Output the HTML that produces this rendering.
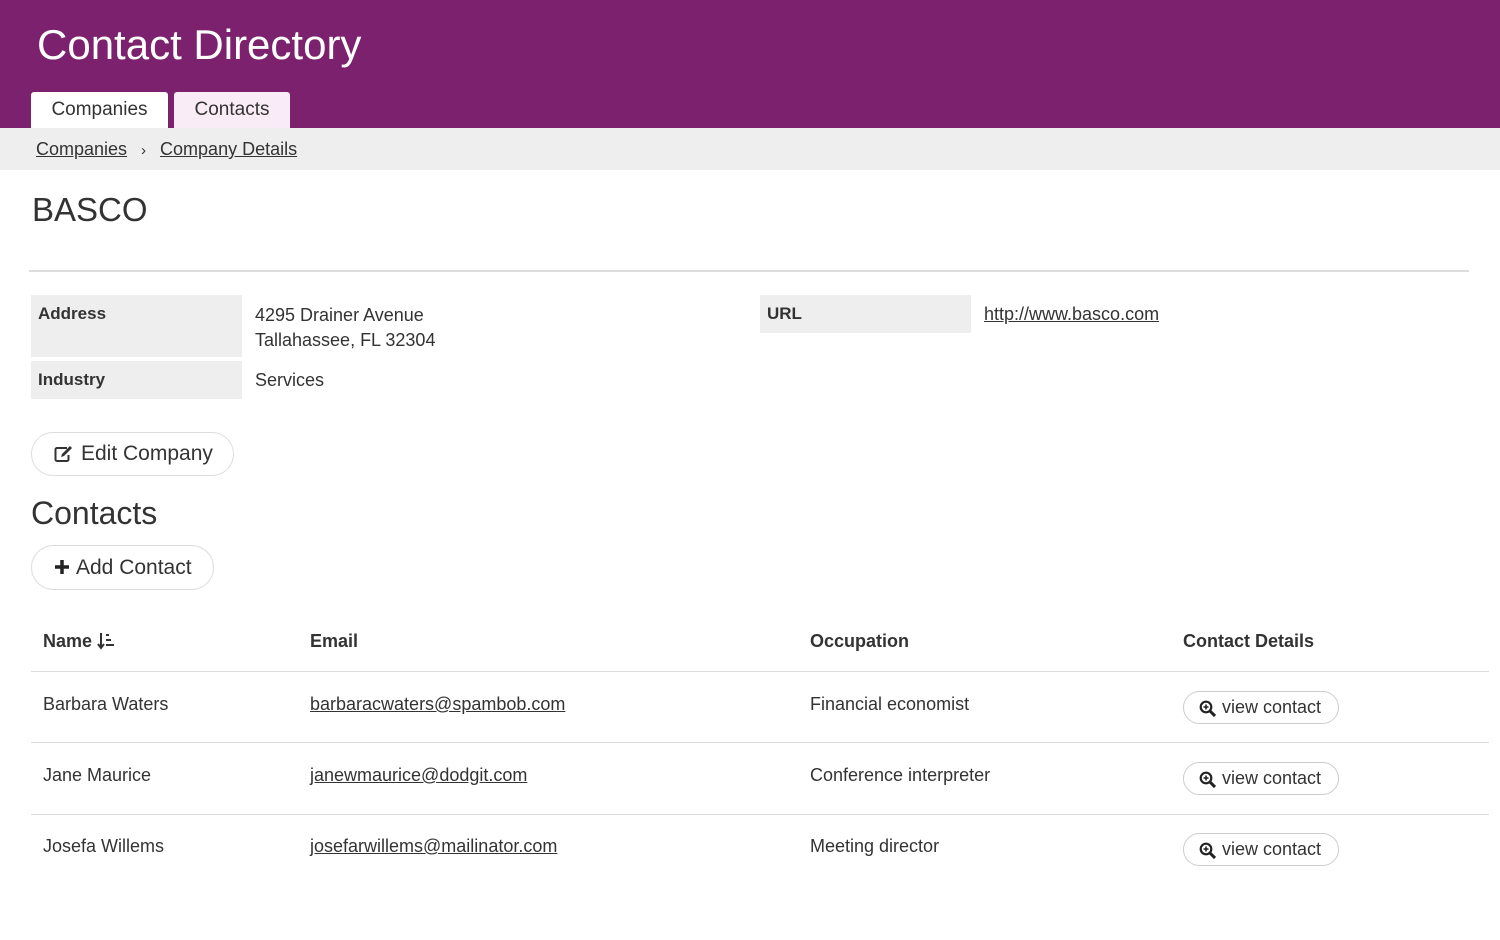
<!DOCTYPE html>
<html><head><style>
*{box-sizing:border-box;margin:0;padding:0}
body{width:1500px;height:940px;background:#fff;font-family:"Liberation Sans",sans-serif;color:#333;position:relative;overflow:hidden}
.abs{position:absolute;white-space:nowrap}
a{color:#333;text-decoration:underline}
.hdr{position:absolute;left:0;top:0;width:1500px;height:128px;background:#7b216d}
.tab{position:absolute;top:92px;height:36px;border-radius:3px 3px 0 0;font-size:19px;line-height:36px;text-align:center;color:#333}
.lbl{position:absolute;background:#eee;font-weight:bold;font-size:17px;padding:9px 7px}
.btn{position:absolute;border:1px solid #ddd;border-radius:24px;font-size:21px;color:#333}
.vbtn{position:absolute;left:1183px;width:156px;height:33px;border:1px solid #ccc;border-radius:17px;font-size:18px;line-height:31px;padding-left:38px}
.vbtn svg{position:absolute;left:15px;top:8px}
.row{position:absolute;font-size:18px}
.line{position:absolute;left:31px;width:1458px;height:1px;background:#ddd}
</style></head><body>
<div class="hdr"></div>
<div class="abs" style="left:37px;top:21px;font-size:42px;color:#fff">Contact Directory</div>
<div class="tab" style="left:31px;width:137px;background:#fff">Companies</div>
<div class="tab" style="left:174px;width:116px;background:#f9ecf7">Contacts</div>
<div class="abs" style="left:0;top:128px;width:1500px;height:42px;background:#eee"></div>
<div class="abs" style="left:36px;top:139px;font-size:18px"><a href="#">Companies</a><span style="margin:0 14px;font-size:15px">›</span><a href="#">Company Details</a></div>
<div class="abs" style="left:32px;top:191px;font-size:33px">BASCO</div>
<div class="abs" style="left:29px;top:270px;width:1440px;height:2px;background:#ddd"></div>
<div class="lbl" style="left:31px;top:295px;width:211px;height:62px">Address</div>
<div class="abs" style="left:255px;top:303px;font-size:18px;line-height:25px">4295 Drainer Avenue<br>Tallahassee, FL 32304</div>
<div class="lbl" style="left:31px;top:361px;width:211px;height:38px">Industry</div>
<div class="abs" style="left:255px;top:370px;font-size:18px">Services</div>
<div class="lbl" style="left:760px;top:295px;width:211px;height:38px">URL</div>
<div class="abs" style="left:984px;top:304px;font-size:18px"><a href="#">http://www.basco.com</a></div>
<div class="btn" style="left:31px;top:432px;width:203px;height:44px;line-height:42px;padding-left:49px">Edit Company
<svg style="position:absolute;left:22px;top:12px" width="20" height="18" viewBox="0 0 20 18"><path d="M13 3H3a1.5 1.5 0 0 0-1.5 1.5v10A1.5 1.5 0 0 0 3 16h10a1.5 1.5 0 0 0 1.5-1.5V10" fill="none" stroke="#333" stroke-width="2"/><path d="M7 12l1-3 8-8 2 2-8 8z" fill="#333"/></svg></div>
<div class="abs" style="left:31px;top:495px;font-size:32px">Contacts</div>
<div class="btn" style="left:31px;top:545px;width:183px;height:45px;line-height:43px;padding-left:44px">Add Contact
<svg style="position:absolute;left:22px;top:13px" width="16" height="16" viewBox="0 0 16 16"><path d="M8 1v14M1 8h14" stroke="#222" stroke-width="3.5"/></svg></div>
<div class="row" style="left:43px;top:631px;font-weight:bold">Name <svg width="18" height="18" viewBox="0 0 18 18" style="vertical-align:-3px"><path d="M4 1v14M1 12l3 4 3-4" stroke="#333" stroke-width="2" fill="none"/><path d="M9 3h3M9 8h5M9 13h8" stroke="#333" stroke-width="2"/></svg></div>
<div class="row" style="left:310px;top:631px;font-weight:bold">Email</div>
<div class="row" style="left:810px;top:631px;font-weight:bold">Occupation</div>
<div class="row" style="left:1183px;top:631px;font-weight:bold">Contact Details</div>
<div class="line" style="top:671px"></div>
<div class="line" style="top:742px"></div>
<div class="line" style="top:814px"></div>

<div class="row" style="left:43px;top:694px">Barbara Waters</div>
<div class="row" style="left:310px;top:694px"><a href="#">barbaracwaters@spambob.com</a></div>
<div class="row" style="left:810px;top:694px">Financial economist</div>
<div class="vbtn" style="top:691px"><svg width="17" height="17" viewBox="0 0 17 17"><circle cx="7" cy="7" r="5.3" fill="none" stroke="#222" stroke-width="2.2"/><path d="M11 11l5 5" stroke="#222" stroke-width="3"/><path d="M7 4.5v5M4.5 7h5" stroke="#222" stroke-width="1.6"/></svg>view contact</div>

<div class="row" style="left:43px;top:765px">Jane Maurice</div>
<div class="row" style="left:310px;top:765px"><a href="#">janewmaurice@dodgit.com</a></div>
<div class="row" style="left:810px;top:765px">Conference interpreter</div>
<div class="vbtn" style="top:762px"><svg width="17" height="17" viewBox="0 0 17 17"><circle cx="7" cy="7" r="5.3" fill="none" stroke="#222" stroke-width="2.2"/><path d="M11 11l5 5" stroke="#222" stroke-width="3"/><path d="M7 4.5v5M4.5 7h5" stroke="#222" stroke-width="1.6"/></svg>view contact</div>

<div class="row" style="left:43px;top:836px">Josefa Willems</div>
<div class="row" style="left:310px;top:836px"><a href="#">josefarwillems@mailinator.com</a></div>
<div class="row" style="left:810px;top:836px">Meeting director</div>
<div class="vbtn" style="top:833px"><svg width="17" height="17" viewBox="0 0 17 17"><circle cx="7" cy="7" r="5.3" fill="none" stroke="#222" stroke-width="2.2"/><path d="M11 11l5 5" stroke="#222" stroke-width="3"/><path d="M7 4.5v5M4.5 7h5" stroke="#222" stroke-width="1.6"/></svg>view contact</div>
</body></html>
